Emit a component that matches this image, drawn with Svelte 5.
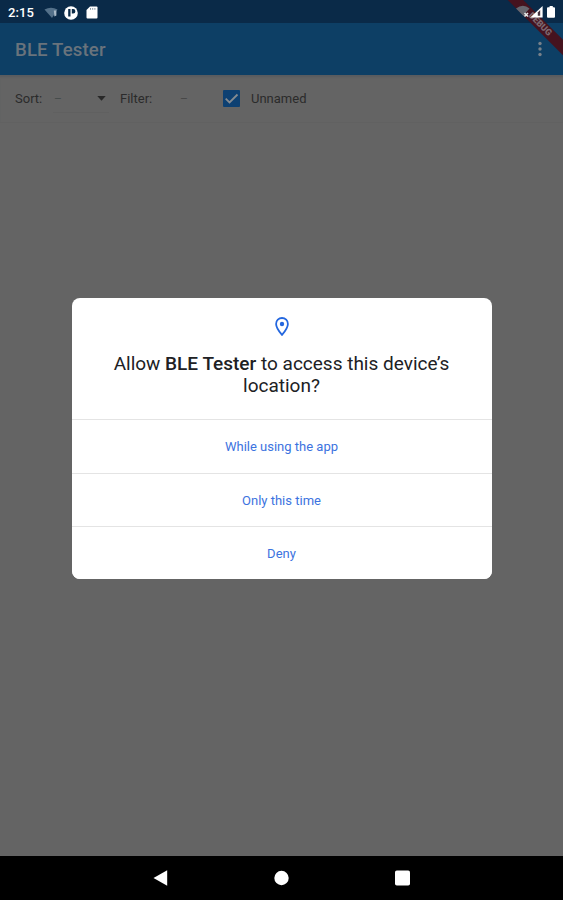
<script>
    let unnamed = true;
    const choices = ["While using the app", "Only this time", "Deny"];
</script>

<div class="screen">
    <header>
        <div class="status">
            <span class="time">2:15</span>
            <svg class="wifi-left" width="14" height="12" viewBox="0 0 14 12">
                <path d="M.5 2.5Q7-1 13.5 2.5L8 11Z" fill="#54718a" />
                <path d="M9.8 3.5h2.6v5l-2 1z" fill="#a9bac7" />
            </svg>
            <svg class="round" width="14" height="14" viewBox="0 0 14 14">
                <circle cx="7" cy="7" r="6.8" fill="#fff" />
                <path d="M4.2 3h2.3v7.5H4.2zM7.8 3h1.4a2 2 0 0 1 0 4.4H7.8z" fill="#0a2a47" />
            </svg>
            <svg class="card" width="12" height="13" viewBox="0 0 12 13">
                <path d="M4 .5h6.5q1 0 1 1v10q0 1-1 1h-9q-1 0-1-1V4z" fill="#fff" />
                <path d="M4.5 2v1.8M6.7 2v1.8M8.9 2v1.8" stroke="#7c8c9a" stroke-width=".9" />
            </svg>
        </div>
        <div class="appbar">
            <h1>BLE Tester</h1>
            <svg width="4" height="16" viewBox="0 0 4 16" fill="#77818a">
                <circle cx="2" cy="2.5" r="1.7" />
                <circle cx="2" cy="8" r="1.7" />
                <circle cx="2" cy="13.5" r="1.7" />
            </svg>
        </div>
        <div class="banner"><span>DEBUG</span></div>
        <svg class="signals" width="44" height="16" viewBox="0 0 44 16">
            <path d="M0 4.5Q7-1 13.5 4.5L10 8.5v4L7.5 12Z" fill="#66666f" />
            <path d="M8.5 9l3.5 3.5M12 9l-3.5 3.5" stroke="#e9e9e9" stroke-width="1.6" />
            <path d="M26.6 2v11.5H14.2Z" fill="#fff" />
            <path d="M24.2 6v5.8h-2.4V8.6Z" fill="#45333e" />
            <path d="M32 3.2h1.6V2h3.2v1.2H38q1 0 1 1v8.6q0 1-1 1h-6q-1 0-1-1V4.2q0-1 1-1Z" fill="#fff" />
        </svg>
    </header>

    <div class="filters">
        <span class="label sort">Sort:</span>
        <div class="select">
            <span>–</span>
            <svg width="9" height="5" viewBox="0 0 9 5"><path d="M.3 0h8.4L4.5 4.8z" fill="#282828" /></svg>
        </div>
        <span class="label filter">Filter:</span>
        <span class="none">–</span>
        <button class="check" aria-label="Unnamed" on:click={() => (unnamed = !unnamed)}>
            {#if unnamed}
                <svg width="17" height="17" viewBox="0 0 17 17">
                    <path d="M2.7 8.7l3.8 3.8 8-8" fill="none" stroke="#858b91" stroke-width="1.8" />
                </svg>
            {/if}
        </button>
        <span class="label">Unnamed</span>
    </div>

    <main>
        <div class="dialog">
            <div class="message">
                <svg width="14" height="19" viewBox="0 0 14 19">
                    <path
                        d="M7 1A5.9 5.9 0 0 0 1.1 6.9C1.1 11 7 17.8 7 17.8S12.9 11 12.9 6.9A5.9 5.9 0 0 0 7 1Z"
                        fill="none"
                        stroke="#2467df"
                        stroke-width="1.8"
                    />
                    <circle cx="7" cy="7" r="2.2" fill="#2467df" />
                </svg>
                <p>Allow <b>BLE Tester</b> to access this device’s<br />location?</p>
            </div>
            {#each choices as choice}
                <button class="choice">{choice}</button>
            {/each}
        </div>
    </main>

    <nav>
        <svg width="15" height="16" viewBox="0 0 15 16"><path d="M.5 8L14.2.2v15.6z" fill="#fff" /></svg>
        <svg width="15" height="16" viewBox="0 0 15 16"><circle cx="7.5" cy="8" r="7.2" fill="#fff" /></svg>
        <svg width="15" height="16" viewBox="0 0 15 16"><rect y=".4" width="15" height="15.2" rx="1.8" fill="#fff" /></svg>
    </nav>
</div>

<style>
    :global(body) {
        margin: 0;
    }
    .screen {
        display: flex;
        flex-direction: column;
        height: 900px;
        overflow: hidden;
        background: #646464;
        font-family: Roboto, sans-serif;
    }
    svg {
        display: block;
        flex: none;
    }
    header {
        position: relative;
        overflow: hidden;
        height: 75px;
        background: #0d3f65;
    }
    .status {
        display: flex;
        align-items: center;
        box-sizing: border-box;
        height: 23px;
        padding: 2px 0 0 8px;
        background: #0a2a48;
    }
    .time {
        width: 36px;
        color: #fff;
        font-size: 13px;
        font-weight: 500;
        letter-spacing: 0.1px;
    }
    .round {
        margin-left: 6px;
    }
    .card {
        margin-left: 8px;
    }
    .appbar {
        display: flex;
        align-items: center;
        justify-content: space-between;
        height: 52px;
        padding: 0 21px 0 15px;
    }
    h1 {
        margin: 1px 0 0;
        color: #69737c;
        font-size: 18.6px;
        font-weight: 500;
        letter-spacing: 0.15px;
    }
    .banner {
        position: absolute;
        top: 19px;
        right: -27px;
        width: 100px;
        height: 11px;
        background: #45131f;
        color: #7d6870;
        font-size: 9px;
        font-weight: 900;
        line-height: 11px;
        text-align: center;
        transform: rotate(45deg);
    }
    .signals {
        position: absolute;
        top: 4px;
        right: 3px;
    }
    .filters {
        display: flex;
        align-items: center;
        box-sizing: border-box;
        height: 48px;
        padding: 0 0 1px 15px;
        border-bottom: 1px solid #616161;
        box-shadow: inset 0 3px 2px -1px #595c5f;
    }
    .label {
        color: #2b2b2b;
        font-size: 13px;
    }
    .sort {
        width: 30px;
    }
    .select {
        display: flex;
        align-items: center;
        justify-content: space-between;
        box-sizing: border-box;
        width: 56px;
        height: 29px;
        margin-left: 8px;
        padding: 2px 3px 0 1px;
        border-bottom: 1px solid #606060;
        color: #464c4c;
        font-size: 12px;
    }
    .filter {
        width: 60px;
        margin-left: 11px;
    }
    .none {
        width: 43px;
        padding-top: 1px;
        color: #484848;
        font-size: 12px;
    }
    .check {
        flex: none;
        width: 17px;
        height: 17px;
        margin-right: 11px;
        padding: 0;
        border: 0;
        border-radius: 1px;
        background: #0d4072;
    }
    main {
        display: flex;
        flex: 1;
        flex-direction: column;
        align-items: center;
        padding-top: 175px;
    }
    .dialog {
        width: 420px;
        height: 281px;
        overflow: hidden;
        border-radius: 8px;
        background: #fff;
    }
    .message {
        display: flex;
        flex-direction: column;
        align-items: center;
        box-sizing: border-box;
        height: 121px;
        padding-top: 19px;
    }
    p {
        margin: 17px 0 0;
        color: #202124;
        font-size: 19px;
        line-height: 22px;
        text-align: center;
    }
    b {
        font-weight: 500;
    }
    .choice {
        display: block;
        box-sizing: border-box;
        width: 100%;
        height: 53.5px;
        padding: 1px 0 0;
        border: 0;
        border-top: 1px solid #e4e4e4;
        background: #fff;
        color: #3c73e0;
        font: 400 13px Roboto, sans-serif;
    }
    nav {
        display: flex;
        align-items: center;
        justify-content: center;
        gap: 106px;
        height: 44px;
        background: #000;
    }
</style>
